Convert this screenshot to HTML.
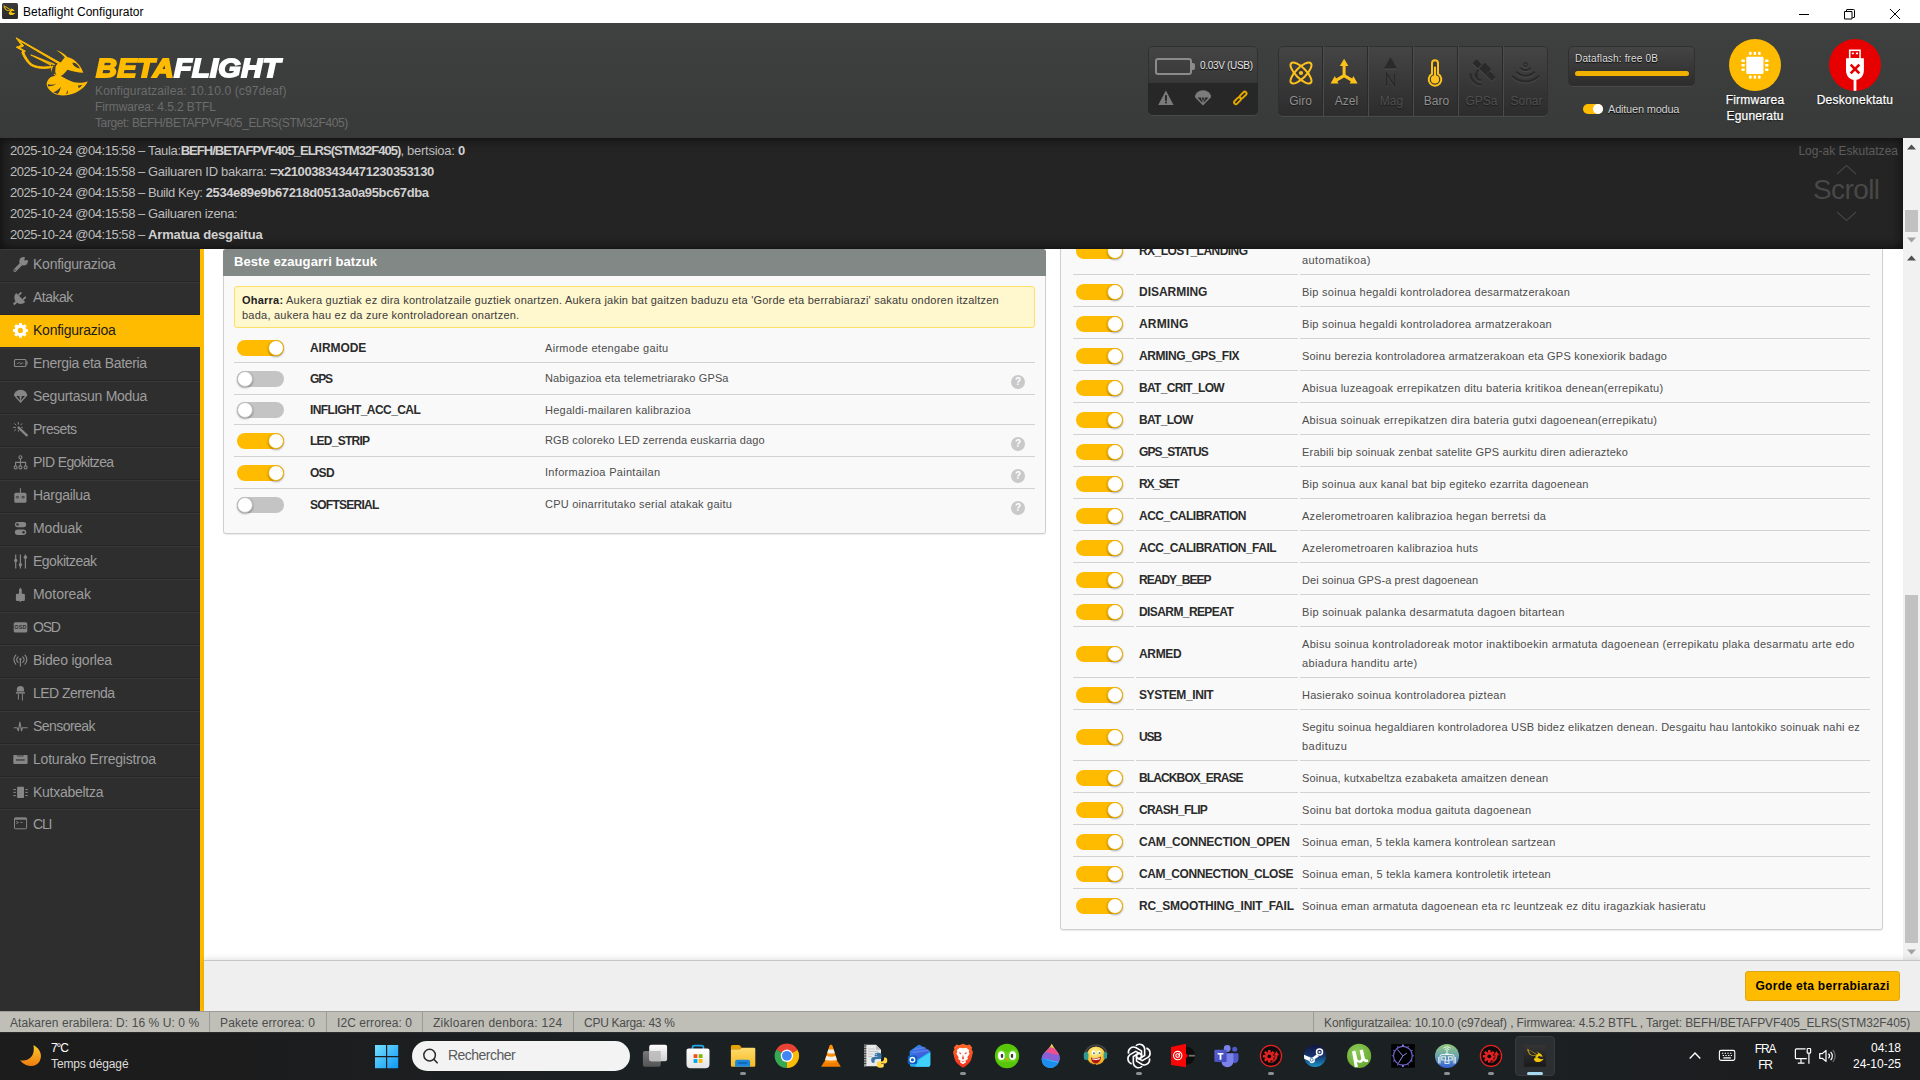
<!DOCTYPE html>
<html lang="eu">
<head>
<meta charset="utf-8">
<title>Betaflight Configurator</title>
<style>
*{box-sizing:border-box;margin:0;padding:0}
html,body{width:1920px;height:1080px;overflow:hidden;background:#fff}
body{font-family:"Liberation Sans",sans-serif;font-size:12px;color:#303030;position:relative}
.abs{position:absolute}
svg{display:block}

/* ---------- window title bar ---------- */
#titlebar{position:absolute;left:0;top:0;width:1920px;height:23px;background:#fff}
#titlebar .ico{position:absolute;left:2px;top:3px;width:16px;height:16px;background:linear-gradient(#3b3b3b,#2a2a2a);border-radius:1.500px;overflow:hidden}
#titlebar .ttl{position:absolute;left:23px;top:5px;font-size:12px;line-height:15px;color:#000;white-space:nowrap}
#titlebar .wb{position:absolute;top:0;width:46px;height:23px}

/* ---------- header ---------- */
#header{position:absolute;left:0;top:23px;width:1920px;height:115px;background:linear-gradient(#3f4140,#383a39)}
#logo{position:absolute;left:10px;top:9px;width:90px;height:68px}
#brand{position:absolute;left:96px;top:31px;font-size:26px;line-height:28px;font-weight:700;font-style:italic;letter-spacing:.3px;white-space:nowrap;color:#fff;-webkit-text-stroke:1.8px;transform:scaleX(1.113);transform-origin:0 0}
#brand b{color:#ffbb00;font-weight:700}
#ver{position:absolute;left:95px;top:60px;font-size:12px;line-height:16px;color:#6c6c6c;white-space:nowrap}

.hbox{position:absolute;border-radius:5px;background:linear-gradient(#454545,#2c2c2c);box-shadow:inset 0 0 0 1px #303030,0 1px 0 #484a49}
#batt{left:1148px;top:23px;width:110px;height:69px;overflow:hidden}
#batt .low{position:absolute;left:0;top:37px;width:110px;height:32px;background:#272727}
#batt .cell{position:absolute;left:7px;top:12px;width:37px;height:17px;border:2px solid #8b8b8b;border-radius:3px}
#batt .nub{position:absolute;left:44px;top:17px;width:3px;height:7px;background:#8b8b8b;border-radius:0 2px 2px 0}
#batt .v{position:absolute;left:52px;top:13px;font-size:10px;line-height:14px;color:#e6e6e6;white-space:nowrap;text-shadow:0 1px 1px #000}
#sens{left:1278px;top:23px;width:270px;height:70px;overflow:hidden}
#sens .c{position:absolute;top:0;width:45px;height:70px;border-left:1px solid #4b4b4b;box-shadow:-1px 0 0 #2a2a2a}
#sens .c:first-child{border-left:0;box-shadow:none}
#sens .c>span{position:absolute;left:0;width:45px;top:48px;text-align:center;font-size:12px;line-height:14px;color:#4f4f4f;text-shadow:0 1px 1px #1a1a1a}
#sens .c.on>span{color:#8f8f8f}
#sens>svg{position:absolute}
#dflash{left:1568px;top:23px;width:127px;height:40px}
#dflash .t{position:absolute;left:7px;top:6px;font-size:10px;line-height:13px;color:#dedede;white-space:nowrap;text-shadow:0 1px 1px #000}
#dflash .bar{position:absolute;left:7px;top:25px;width:114px;height:5px;border-radius:3px;background:#f0b000}
#expert{position:absolute;left:1583px;top:81px;width:20px;height:10px;border-radius:5px;background:#ffbb00}
#expert i{position:absolute;right:0;top:0;width:10px;height:10px;border-radius:5px;background:#fff}
#expertl{position:absolute;left:1608px;top:79px;font-size:11px;line-height:14px;color:#d2d2d2;white-space:nowrap;text-shadow:0 1px 1px #000}
.round{position:absolute;top:16px;width:52px;height:52px;border-radius:50%}
.rl{position:absolute;top:69px;width:100px;text-align:center;font-size:12px;line-height:16px;color:#fff;white-space:nowrap;text-shadow:0 1px 1px #000;-webkit-text-stroke:.25px #fff}
</style>
</head>
<body>

<!-- ================= TITLE BAR ================= -->
<div id="titlebar">
  <div class="ico"><svg width="16" height="16" viewBox="0 0 16 16"><g transform="translate(.6 1.600) scale(.165)" fill="#f5c40c"><path stroke="#f5c40c" stroke-width="2.500" d="M50.800 31.200L6 5.800 11.600 13.300 6.300 15.200 13.200 18.900 11.800 20.300C13.500 25 16.500 30 20.500 33.200 26 36.500 35 37.200 41.500 35.600L41 33C35 34.500 27 34 22.500 31 19.500 28.500 17 24.600 15.500 20.400L17 19 11.500 15.700 15.500 14 12 9.500 48 32.300Z"/><path d="M46.200 18.200C50.500 19.200 55 22 57.600 25.200 62 25.800 66.500 29.500 69.500 33.500 71.200 35.800 72.500 38.200 73.300 40.800 68 40.300 62 39.300 57.200 37.700 56 40 53.800 42.200 50.800 44.100 55 46.500 59.500 49.200 64 50.300 68.500 51.200 73.500 50.800 77.800 49.500 75.500 54.500 70.500 58.500 65 61 59.500 63.300 53 64 47.500 62.800 42.500 61.500 38.500 58 36.800 53.500 36.200 50.500 38 47 41 45 42.500 44.200 44 43.800 45.500 43.700 43.800 43 42.300 41.500 41.600 39.500 40.800 37.300 41 35 42 33.500L43.800 34.400C42.800 37.500 43.500 41.500 46.500 43.200 45.500 41.500 44.800 39.200 45 37 45.300 34.500 46.500 32.500 48.500 31.600 50 30.800 51.500 30 52.300 28.500 53.200 27.200 54 26.200 54.800 25.600 52.500 22.600 49.500 20 46.200 18.200Z"/></g></svg></div>
  <div class="ttl"><span style="letter-spacing:0.05px">Betaflight Configurator</span></div>
  <div class="wb" style="left:1781px"><svg width="46" height="23"><path d="M18 14.500h10" stroke="#000" stroke-width="1" fill="none"/></svg></div>
  <div class="wb" style="left:1826px"><svg width="46" height="23"><path d="M18.500 11.500h7.500v7.500h-7.500zM20.500 11.500v-1.500q0-.5.5-.5h6.500q1 0 1 1v6.500q0 .5-.5.5h-1.500" stroke="#000" stroke-width="1" fill="none"/></svg></div>
  <div class="wb" style="left:1872px"><svg width="46" height="23"><path d="M18 9l10 10M28 9l-10 10" stroke="#000" stroke-width="1" fill="none"/></svg></div>
</div>

<!-- ================= HEADER ================= -->
<div id="header">
  <div id="logo"><svg viewBox="0 0 90 68" width="90" height="68">
<g fill="#ffbb00" stroke="none">
<path stroke="#ffbb00" stroke-width="1" stroke-linejoin="miter" d="M50.800 31.200L6 5.800 11.600 13.300 6.300 15.200 13.200 18.900 11.800 20.300C13.500 25 16.500 30 20.500 33.200 26 36.500 35 37.200 41.500 35.600L41 34.200C35 35.600 27 35.200 21.800 32.200 18.200 29.200 15.600 24.600 13.800 20.400L15.400 19.200 9.300 15.700 13.600 14 9.600 8.700 49.500 32.300Z"/>
<path stroke="#ffbb00" stroke-width=".7" d="M21 22.800L44.700 32.200 44.300 33 20.800 23.300ZM24.500 24.200L41.200 32.600 40.700 33.300 24 24.600Z"/>
<path d="M46.200 18.200C50.500 19.200 55 22 57.600 25.200 62 25.800 66.500 29.500 69.500 33.500 71.200 35.800 72.500 38.200 73.300 40.800 68 40.300 62 39.300 57.200 37.700 56 40 53.800 42.200 50.800 44.100 55 46.500 59.500 49.200 64 50.300 68.500 51.200 73.500 50.800 77.800 49.500 75.500 54.500 70.500 58.500 65 61 59.500 63.300 53 64 47.500 62.800 42.500 61.500 38.500 58 36.800 53.500 36.200 50.500 38 47 41 45 42.500 44.200 44 43.800 45.500 43.700 43.800 43 42.300 41.500 41.600 39.500 40.800 37.300 41 35 42 33.500L43.800 34.400C42.800 37.500 43.500 41.500 46.500 43.200 45.500 41.500 44.800 39.200 45 37 45.300 34.500 46.500 32.500 48.500 31.600 50 30.800 51.500 30 52.300 28.500 53.200 27.200 54 26.200 54.800 25.600 52.500 22.600 49.500 20 46.200 18.200Z"/>
</g>
<g fill="#3d3f3e">
<ellipse cx="43.600" cy="38.600" rx="1.700" ry="4.300" transform="rotate(8 43.600 38.600)"/>
<path d="M62.300 31C64.500 30 67.500 32 70 36.400 66.500 36 63.500 34.500 62.300 31Z"/>
<path d="M37.800 52.200C40.500 53 43.500 52.800 46.300 51.800 44 53.800 40.500 54.600 38 54.200Z"/>
<path d="M43.200 60.200C46 59.500 48.800 57.500 50.800 54.800 50.500 57.500 49.500 60 47.800 62Z"/>
<path d="M55.800 61.500C56.800 60.500 57.500 59.300 57.700 58 58.200 59.300 58 60.600 57.300 61.700Z"/>
<path d="M68 53.600C69.500 53.700 71 53.400 72.300 52.800 71.500 54.200 70 55.500 68.600 56Z"/>
</g>
</svg></div>
  <div id="brand"><b>BETA</b>FLIGHT</div>
  <div id="ver"><span style="letter-spacing:0.14px">Konfiguratzailea: 10.10.0 (c97deaf)</span><br><span style="letter-spacing:-0.09px">Firmwarea: 4.5.2 BTFL</span><br><span style="letter-spacing:-0.39px">Target: BEFH/BETAFPVF405_ELRS(STM32F405)</span></div>

  <div id="batt" class="hbox">
    <div class="low"></div>
    <div class="cell"></div><div class="nub"></div>
    <div class="v"><span style="letter-spacing:-0.31px">0.03V (USB)</span></div><svg class="abs" style="left:10px;top:44px" width="16" height="16" viewBox="0 0 16 16"><path d="M7.900 .4L15.600 15.100H.2Z" fill="#7b7b7b"/><rect x="7" y="5.200" width="1.900" height="5.600" fill="#272727"/><rect x="7" y="11.600" width="1.900" height="1.700" fill="#272727"/></svg><svg class="abs" style="left:47px;top:44px" width="16" height="16" viewBox="0 0 16 16"><path d="M0 7.200A8 7 0 0 1 16 7.200L8 15.400Z" fill="#7b7b7b"/><path d="M2.600 7.400L6 7.400 7.400 13ZM10 7.400L13.400 7.400 8.600 13ZM6.900 7.400H9.100L8 12.400Z" fill="#272727"/></svg><svg class="abs" style="left:84px;top:44px" width="17" height="16" viewBox="0 0 17 16"><g fill="none" stroke="#e6a800" stroke-width="1.900" transform="rotate(-45 8.300 7.900)"><rect x=".25" y="6.100" width="8.100" height="3.600" rx="1.800"/><rect x="8.250" y="6.100" width="8.100" height="3.600" rx="1.800"/></g></svg>
  </div>

  <div id="sens" class="hbox">
    <div class="c on" style="left:0"><span>Giro</span></div><svg style="left:11px;top:15px" width="24" height="24" viewBox="0 0 24 24" overflow="visible"><g fill="none" stroke="#fcc21b" stroke-width="2"><ellipse cx="12" cy="12" rx="13.900" ry="5.200" transform="rotate(45 12 12)"/><ellipse cx="12" cy="12" rx="13.900" ry="5.200" transform="rotate(-45 12 12)"/></g><circle cx="12" cy="12" r="2.100" fill="#fcc21b"/></svg><svg style="left:52px;top:12px" width="30" height="27" viewBox="0 0 30 27"><g fill="#fcc21b"><path d="M14.100 .8L18.400 8.100H9.800Z"/><rect x="12.600" y="7.500" width="3" height="10.500"/><path d="M14.100 17.600L5.500 22.600" stroke="#fcc21b" stroke-width="3" fill="none"/><path d="M14.100 17.600L22.700 22.600" stroke="#fcc21b" stroke-width="3" fill="none"/><path d="M.6 25.500L4.800 17.900 8.500 25.500Z"/><path d="M27.600 25.500L23.400 17.900 19.700 25.500Z"/></g></svg><svg style="left:102px;top:9px;filter:drop-shadow(0 1px 0 rgba(255,255,255,.09))" width="22" height="33" viewBox="0 0 22 33"><path d="M10.500 1.900L16.900 13.600H4.100Z" fill="#2a2a2a"/><path d="M6.600 31V18.500L14.600 31V18.500" fill="none" stroke="#2a2a2a" stroke-width="1.400"/></svg><svg style="left:149px;top:13px" width="16" height="29" viewBox="0 0 16 29"><path d="M5 4.200a3 3 0 0 1 6 0V14.900a6.300 6.300 0 1 1-6 0Z" fill="none" stroke="#fcc21b" stroke-width="2"/><circle cx="8" cy="20.400" r="4.100" fill="#fcc21b"/><rect x="7" y="7.700" width="2" height="10" fill="#fcc21b"/></svg><svg style="left:0;top:0;filter:drop-shadow(0 1px 0 rgba(255,255,255,.09))" width="270" height="70" viewBox="0 0 270 70"><g fill="#2a2a2a"><rect x="196.4" y="14.3" width="5.600" height="7.200" transform="rotate(-45 199.2 17.9)"/><rect x="203.1" y="18.3" width="8.200" height="9.200" transform="rotate(-45 207.2 22.9)"/><rect x="210.0" y="25.9" width="5.600" height="8.400" transform="rotate(-45 212.8 30.1)"/></g><g fill="none" stroke="#2a2a2a" stroke-width="2.100"><path d="M197.6 27.4a5.700 5.700 0 0 0 5.700 6.700"/><path d="M192.5 27.4a10.800 10.800 0 0 0 10.800 11.200"/><path d="M200.8 23.9a4 4 0 0 0 -1 6.500" /></g></svg><svg style="left:0;top:0;filter:drop-shadow(0 1px 0 rgba(255,255,255,.09))" width="270" height="70" viewBox="0 0 270 70"><g fill="none" stroke="#2a2a2a" stroke-width="2"><path d="M242.2 21.9A7.4 7.4 0 0 0 252.8 21.9"/><path d="M238.2 25.7A12.9 12.9 0 0 0 256.8 25.7"/><path d="M234.0 29.8A18.8 18.8 0 0 0 261.0 29.8"/></g><circle cx="247.5" cy="18.7" r="1.800" fill="none" stroke="#2a2a2a" stroke-width="1.300"/></svg>
    <div class="c on" style="left:45px"><span>Azel</span></div>
    <div class="c" style="left:90px"><span>Mag</span></div>
    <div class="c on" style="left:135px"><span>Baro</span></div>
    <div class="c" style="left:180px"><span>GPSa</span></div>
    <div class="c" style="left:225px"><span>Sonar</span></div>
  </div>

  <div id="dflash" class="hbox"><div class="t"><span style="letter-spacing:0.17px">Dataflash: free 0B</span></div><div class="bar"></div></div>
  <div id="expert"><i></i></div>
  <div id="expertl"><span style="letter-spacing:-0.21px">Adituen modua</span></div>

  <div class="round" style="left:1729px;background:#ffbb00"><svg width="52" height="52" viewBox="0 0 52 52"><g fill="#fff"><rect x="17.300" y="17.700" width="17.200" height="17.200" rx="1.200"/><rect x="20.1" y="12.700" width="2.500" height="3.400" rx=".8"/><rect x="20.1" y="36.400" width="2.500" height="3.400" rx=".8"/><rect x="24.6" y="12.700" width="2.500" height="3.400" rx=".8"/><rect x="24.6" y="36.400" width="2.500" height="3.400" rx=".8"/><rect x="29.1" y="12.700" width="2.500" height="3.400" rx=".8"/><rect x="29.1" y="36.400" width="2.500" height="3.400" rx=".8"/><rect x="12.400" y="20.5" width="3.500" height="2.500" rx=".8"/><rect x="36" y="20.5" width="3.500" height="2.500" rx=".8"/><rect x="12.400" y="25" width="3.500" height="2.500" rx=".8"/><rect x="36" y="25" width="3.500" height="2.500" rx=".8"/><rect x="12.400" y="29.4" width="3.500" height="2.500" rx=".8"/><rect x="36" y="29.4" width="3.500" height="2.500" rx=".8"/></g></svg></div>
  <div class="rl" style="left:1705px"><span style="letter-spacing:0.22px">Firmwarea</span><br><span style="letter-spacing:0.18px">Eguneratu</span></div>
  <div class="round" style="left:1829px;background:#e60000;overflow:hidden"><svg width="52" height="52" viewBox="0 0 52 52"><g fill="#fff"><path d="M19.900 10.600H31.800V19.300H34.900V31.200C34.900 36.500 31.500 41 26 41 20.500 41 17 36.500 17 31.200V19.300H19.900Z"/><rect x="24.600" y="40" width="2.800" height="11.800"/></g><rect x="21.500" y="12.100" width="8.800" height="6.900" fill="#e60000"/><rect x="22.800" y="13.600" width="2.100" height="1.600" fill="#fff"/><rect x="26.900" y="13.600" width="2.100" height="1.600" fill="#fff"/><path d="M21.700 25.600L30.300 34.400M30.300 25.600L21.700 34.400" stroke="#e60000" stroke-width="2.600" fill="none"/></svg></div>
  <div class="rl" style="left:1805px"><span style="letter-spacing:0.27px">Deskonektatu</span></div>
</div>

<!-- ================= LOG ================= -->
<style>
#log{position:absolute;left:0;top:138px;width:1903px;height:111px;background:#242424;box-shadow:inset 0 0 12px #0a0a0a;overflow:hidden}
#log .l{position:absolute;left:10px;font-size:13px;line-height:21px;color:#bdbdbd;white-space:pre}
#log .l b{font-weight:700;color:#d0d0d0}
#log .lt{position:absolute;right:5px;top:6px;font-size:12px;line-height:15px;color:#5c5c5c}
#log .sc{position:absolute;left:1813px;top:35px;font-size:28px;line-height:34px;color:#484848;letter-spacing:-.6px}
.sbar{position:absolute;left:1903px;width:17px;background:#f1f1f1}
.sbar .th{position:absolute;left:2px;width:13px;background:#c1c1c1}
.sbar svg{position:absolute;left:4px}

/* ---------- sidebar ---------- */
#side{position:absolute;left:0;top:249px;width:200px;height:762px;background:#2e2e2e}
#side .i{position:absolute;left:0;width:200px;height:33px;border-top:1px solid #383838;border-bottom:1px solid #262626;color:#9d9d9d;font-size:14px;line-height:16px;white-space:nowrap}
#side .i>span{position:absolute;left:33px;top:6px}
#side .i svg{position:absolute;left:12px;top:6px;width:17px;height:17px;color:#868686}
#side .i.act{background:#ffbb00;color:#1c1c1c;border-color:#ffbb00;width:204px;height:32px}
#ybar{position:absolute;left:200px;top:249px;width:4px;height:762px;background:#ffbb00}
</style>
<div id="log">
  <div class="l" style="top:2px"><span style="letter-spacing:-0.45px">2025-10-24 @04:15:58 &ndash; </span><span style="letter-spacing:-0.34px">Taula:</span><b><span style="letter-spacing:-0.96px">BEFH/BETAFPVF405_ELRS(STM32F405)</span></b><span style="letter-spacing:-0.26px">, bertsioa: </span><b>0</b></div>
  <div class="l" style="top:23px"><span style="letter-spacing:-0.45px">2025-10-24 @04:15:58 &ndash; </span><span style="letter-spacing:-0.27px">Gailuaren ID bakarra: </span><b><span style="letter-spacing:-0.42px">=x2100383434471230353130</span></b></div>
  <div class="l" style="top:44px"><span style="letter-spacing:-0.45px">2025-10-24 @04:15:58 &ndash; </span><span style="letter-spacing:-0.41px">Build Key: </span><b><span style="letter-spacing:-0.37px">2534e89e9b67218d0513a0a95bc67dba</span></b></div>
  <div class="l" style="top:65px"><span style="letter-spacing:-0.45px">2025-10-24 @04:15:58 &ndash; </span><span style="letter-spacing:-0.33px">Gailuaren izena:</span></div>
  <div class="l" style="top:86px"><span style="letter-spacing:-0.45px">2025-10-24 @04:15:58 &ndash; </span><b><span style="letter-spacing:-0.15px">Armatua desgaitua</span></b></div>
  <div class="lt"><span style="letter-spacing:0.01px">Log-ak Eskutatzea</span></div>
  <div class="sc">Scroll</div>
  <svg class="abs" style="left:1836px;top:26px" width="21" height="11"><path d="M1 10L10.500 1.500 20 10" fill="none" stroke="#444" stroke-width="1.200"/></svg>
  <svg class="abs" style="left:1836px;top:73px" width="21" height="11"><path d="M1 1L10.500 9.500 20 1" fill="none" stroke="#444" stroke-width="1.200"/></svg>
</div>
<div class="sbar" style="top:138px;height:111px">
  <svg style="top:6px" width="9" height="6"><path d="M0 5.500L4.500 .5 9 5.500z" fill="#505050"/></svg>
  <div class="th" style="top:72px;height:22px"></div>
  <svg style="top:99px" width="9" height="6"><path d="M0 .5L4.500 5.500 9 .5z" fill="#a3a3a3"/></svg>
</div>

<!-- ================= SIDEBAR ================= -->
<div id="side">
  <div class="i" style="top:0"><svg viewBox="0 0 17 17" ><path d="M2.900 14.300L10 7.200" stroke="currentColor" stroke-width="3.100" stroke-linecap="round"/><circle cx="11.600" cy="5.200" r="4.300" fill="currentColor"/><path d="M12.300 4.500L13.100 0 17 0 17 3.700Z" fill="#2e2e2e"/><circle cx="2.900" cy="14.300" r=".7" fill="#2e2e2e"/></svg><span><span style="letter-spacing:-0.24px">Konfigurazioa</span></span></div>
  <div class="i" style="top:33px"><svg viewBox="0 0 17 17" ><g transform="rotate(45 8.700 8.500)" fill="currentColor"><path d="M2.300 8.500h12.800a6.400 6.400 0 0 1-12.800 0z"/><rect x="4.700" y="4.300" width="1.800" height="4.200" rx=".8"/><rect x="10.900" y="4.300" width="1.800" height="4.200" rx=".8"/><rect x="7.600" y="14.400" width="2.200" height="4"/></g></svg><span><span style="letter-spacing:-0.50px">Atakak</span></span></div>
  <div class="i act" style="top:66px"><svg viewBox="0 0 17 17" ><g transform="translate(8.400 8.400)" fill="#fff"><circle r="4.200" fill="none" stroke="#fff" stroke-width="3.200"/><rect x="-1.500" y="-7.400" width="3" height="2.600" rx=".5" transform="rotate(0)"/><rect x="-1.500" y="-7.400" width="3" height="2.600" rx=".5" transform="rotate(45)"/><rect x="-1.500" y="-7.400" width="3" height="2.600" rx=".5" transform="rotate(90)"/><rect x="-1.500" y="-7.400" width="3" height="2.600" rx=".5" transform="rotate(135)"/><rect x="-1.500" y="-7.400" width="3" height="2.600" rx=".5" transform="rotate(180)"/><rect x="-1.500" y="-7.400" width="3" height="2.600" rx=".5" transform="rotate(225)"/><rect x="-1.500" y="-7.400" width="3" height="2.600" rx=".5" transform="rotate(270)"/><rect x="-1.500" y="-7.400" width="3" height="2.600" rx=".5" transform="rotate(315)"/></g></svg><span><span style="letter-spacing:-0.24px">Konfigurazioa</span></span></div>
  <div class="i" style="top:99px"><svg viewBox="0 0 17 17" ><rect x="2.500" y="4.500" width="11.400" height="7" rx="1" fill="none" stroke="currentColor" stroke-width="1.200"/><rect x="14.300" y="6.300" width="1.200" height="3.400" fill="currentColor"/><path d="M4.800 8.400h1.600l1-1.200 1.400 2.200 1-1.400h1.500" fill="none" stroke="currentColor" stroke-width=".8"/></svg><span><span style="letter-spacing:-0.32px">Energia eta Bateria</span></span></div>
  <div class="i" style="top:132px"><svg viewBox="0 0 17 17" ><path d="M1.900 7.600A6.700 5.800 0 0 1 15.300 7.600L8.600 15Z" fill="currentColor"/><path d="M4.300 7.900L7.400 7.900 8.200 12.800ZM9.800 7.900L12.900 7.900 9 12.800Z" fill="#2e2e2e"/></svg><span><span style="letter-spacing:-0.26px">Segurtasun Modua</span></span></div>
  <div class="i" style="top:165px"><svg viewBox="0 0 17 17" ><path d="M6.600 6.600L14.800 14.300" stroke="currentColor" stroke-width="2.400" stroke-linecap="round"/><path d="M6.400 1.100v2.500M1.100 6.400h2.800M2.300 2.400l1.900 1.900M10.100 2.400L8.600 4.200M2.300 9.900l1.900-1.600M9.200 6.400h1.500M6.400 9v1.600" stroke="currentColor" stroke-width="1" fill="none"/></svg><span><span style="letter-spacing:-0.56px">Presets</span></span></div>
  <div class="i" style="top:198px"><svg viewBox="0 0 17 17" ><g fill="none" stroke="currentColor" stroke-width="1.100"><circle cx="8.400" cy="3.200" r="1.500"/><path d="M8.400 4.700v7.200M3.600 11.900V8.400h10V11.900"/><circle cx="3.600" cy="13.400" r="1.500"/><circle cx="8.400" cy="13.400" r="1.500"/><circle cx="13.600" cy="13.400" r="1.500"/></g></svg><span><span style="letter-spacing:-0.63px">PID Egokitzea</span></span></div>
  <div class="i" style="top:231px"><svg viewBox="0 0 17 17" ><rect x="2.300" y="5.800" width="12.200" height="10" rx="1.600" fill="currentColor"/><rect x="7.900" y="1.100" width="1" height="5" fill="currentColor"/><ellipse cx="5.400" cy="10.200" rx="1.300" ry=".9" fill="none" stroke="#2e2e2e" stroke-width=".8"/><ellipse cx="11.100" cy="10.200" rx="1.300" ry=".9" fill="none" stroke="#2e2e2e" stroke-width=".8"/></svg><span><span style="letter-spacing:-0.30px">Hargailua</span></span></div>
  <div class="i" style="top:264px"><svg viewBox="0 0 17 17" ><rect x="2.900" y="1.900" width="11.300" height="5.300" rx="2.650" fill="currentColor"/><rect x="2.900" y="9.500" width="11.300" height="5.500" rx="2.750" fill="currentColor"/><circle cx="5.500" cy="4.500" r="1.200" fill="#2e2e2e"/><circle cx="11.500" cy="12.200" r="1.200" fill="#2e2e2e"/></svg><span><span style="letter-spacing:-0.12px">Moduak</span></span></div>
  <div class="i" style="top:297px"><svg viewBox="0 0 17 17" ><path d="M3.700 1.400v14.100M8.400 1.400v14.100M13.400 1.400v14.100" stroke="currentColor" stroke-width="1.200"/><circle cx="3.700" cy="7.400" r="1.700" fill="currentColor"/><circle cx="8.400" cy="11.700" r="1.700" fill="currentColor"/><circle cx="13.400" cy="4.200" r="1.700" fill="currentColor"/></svg><span><span style="letter-spacing:-0.50px">Egokitzeak</span></span></div>
  <div class="i" style="top:330px"><svg viewBox="0 0 17 17" ><rect x="3.900" y="7.800" width="9" height="7.200" rx="1.300" fill="currentColor"/><path d="M7 8.200V3.800L8.400 1.500 9.800 3.800V8.200Z" fill="currentColor"/><rect x="7.700" y="15" width="1.400" height=".8" fill="currentColor"/></svg><span><span style="letter-spacing:-0.04px">Motoreak</span></span></div>
  <div class="i" style="top:363px"><svg viewBox="0 0 17 17" ><rect x="1.700" y="3.300" width="13.600" height="10.300" rx="1.600" fill="currentColor"/><text x="8.500" y="10.400" text-anchor="middle" font-family="Liberation Sans" font-weight="700" font-size="5.400" fill="#2e2e2e" letter-spacing=".2">OSD</text></svg><span><span style="letter-spacing:-1.20px">OSD</span></span></div>
  <div class="i" style="top:396px"><svg viewBox="0 0 17 17" ><g fill="none" stroke="currentColor" stroke-width="1.200" stroke-linecap="round"><path d="M8.400 7.600V14"/><path d="M6 4.900a3.400 3.400 0 0 0 0 5.400M10.800 4.900a3.400 3.400 0 0 1 0 5.400M3.800 3.100a6.400 6.400 0 0 0 0 9M13 3.100a6.400 6.400 0 0 1 0 9"/></g><circle cx="8.400" cy="7.200" r="1.100" fill="currentColor"/></svg><span><span style="letter-spacing:-0.22px">Bideo igorlea</span></span></div>
  <div class="i" style="top:429px"><svg viewBox="0 0 17 17" ><path d="M4.800 6.400V4.700a3.600 3.600 0 0 1 7.200 0V6.400Z" fill="currentColor"/><rect x="3.900" y="7.100" width="9" height="1.500" fill="currentColor"/><path d="M6.400 8.900v5.700M10.400 8.900v6.600" stroke="currentColor" stroke-width="1"/></svg><span><span style="letter-spacing:-0.53px">LED Zerrenda</span></span></div>
  <div class="i" style="top:462px"><svg viewBox="0 0 17 17" ><path d="M1.700 9.700H5L6.300 12.800 7.900 4.100 9.500 12.800 10.500 9.700H15.700" fill="none" stroke="currentColor" stroke-width="1.100" stroke-linejoin="round"/></svg><span><span style="letter-spacing:-0.55px">Sensoreak</span></span></div>
  <div class="i" style="top:495px"><svg viewBox="0 0 17 17" ><rect x="1.300" y="3.900" width="14.300" height="9.100" rx="1" fill="currentColor"/><rect x="5.400" y="3.900" width="6" height="1.500" fill="#2e2e2e"/><rect x="6" y="4.300" width="4.800" height=".6" fill="currentColor"/><rect x="4.200" y="8.300" width="8.400" height="1.300" fill="#2e2e2e"/><path d="M6.300 8.300v1.300M8.400 8.300v1.300M10.500 8.300v1.300" stroke="currentColor" stroke-width=".5"/></svg><span><span style="letter-spacing:-0.20px">Loturako Erregistroa</span></span></div>
  <div class="i" style="top:528px;height:32px"><svg viewBox="0 0 17 17" ><rect x="5.100" y="2.800" width="6.900" height="11.200" rx=".8" fill="currentColor"/><path d="M1.300 5.600h2.600M1.300 8.400h2.600M1.300 11.600h2.600M13.300 5.600h2.500M13.300 8.400h2.500M13.300 11.600h2.500" stroke="currentColor" stroke-width="1"/></svg><span><span style="letter-spacing:-0.27px">Kutxabeltza</span></span></div>
  <div class="i" style="top:560px;border-bottom:0"><svg viewBox="0 0 17 17" ><rect x="2.500" y="1.900" width="12.100" height="10.900" rx=".8" fill="none" stroke="currentColor" stroke-width="1"/><rect x="2.500" y="1.900" width="12.100" height="1.800" fill="currentColor"/><path d="M4.100 5.200L6.500 6.500 4.100 7.800M8.200 6.400h2.500" fill="none" stroke="currentColor" stroke-width=".8"/></svg><span><span style="letter-spacing:-1.20px">CLI</span></span></div>
</div>
<div id="ybar"></div>

<style>
#content{position:absolute;left:204px;top:249px;width:1699px;height:711px;background:#fff;overflow:hidden}
.panel{position:absolute;background:#f9f9f9;border:1px solid #cfcfcf;border-radius:3px;box-shadow:0 1px 1px rgba(0,0,0,.08)}
.ph{position:absolute;left:-1px;top:-1px;height:27px;background:#828885;border-radius:3px 3px 0 0;color:#fff;font-weight:700;font-size:13px;line-height:16px;padding:5px 0 0 11px;white-space:nowrap}
.note{position:absolute;background:#fff7cd;border:1px solid #ffe066;border-radius:3px;font-size:11px;line-height:15px;color:#3c3c3c;padding:6px 7px;letter-spacing:.23px;white-space:nowrap}
.note b{color:#222}
.r{position:absolute;border-bottom:1px solid #d2d2d2}
.tg{position:absolute;width:47px;height:16px;border-radius:8px;background:#ffbb00}
.tg i{position:absolute;right:0;top:0;width:16px;height:16px;border-radius:50%;background:#fff;border:1px solid #f0b000;box-shadow:0 1px 2px rgba(0,0,0,.35)}
.tg.off{background:#c4c4c4}
.tg.off i{left:0;right:auto;border-color:#bdbdbd}
.lb{position:absolute;font-weight:700;font-size:12px;line-height:16px;color:#2b2b2b;white-space:nowrap}
.ds{position:absolute;font-size:11px;line-height:19px;color:#4d4d4d;white-space:nowrap}
.hp{position:absolute;width:14px;height:14px;border-radius:50%;background:#c9c9c9;color:#fff;font-weight:700;font-size:10px;line-height:14px;text-align:center}
</style>

<div id="content">
<div class="panel" style="left:19px;top:0px;width:823px;height:285px">
<div class="ph" style="width:823px"><span style="letter-spacing:0.07px">Beste ezaugarri batzuk</span></div>
<div class="note" style="left:10px;top:36px;width:801px;height:42px"><b>Oharra:</b> Aukera guztiak ez dira kontrolatzaile guztiek onartzen. Aukera jakin bat gaitzen baduzu eta 'Gorde eta berrabiarazi' sakatu ondoren itzaltzen<br>bada, aukera hau ez da zure kontroladorean onartzen.</div>
<div class="r" style="left:10px;top:82px;width:801px;height:31px">
<div class="tg" style="left:3px;top:8px"><i></i></div>
<div class="lb" style="left:76px;top:8px"><span style="letter-spacing:-0.06px">AIRMODE</span></div>
<div class="ds" style="left:311px;top:7px"><span style="letter-spacing:0.30px">Airmode etengabe gaitu</span></div>
</div>
<div class="r" style="left:10px;top:113px;width:801px;height:32px">
<div class="tg off" style="left:3px;top:8px"><i></i></div>
<div class="lb" style="left:76px;top:8px"><span style="letter-spacing:-1.20px">GPS</span></div>
<div class="ds" style="left:311px;top:6px"><span style="letter-spacing:0.15px">Nabigazioa eta telemetriarako GPSa</span></div>
<div class="hp" style="left:777px;top:12px">?</div>
</div>
<div class="r" style="left:10px;top:145px;width:801px;height:30px">
<div class="tg off" style="left:3px;top:7px"><i></i></div>
<div class="lb" style="left:76px;top:7px"><span style="letter-spacing:-0.57px">INFLIGHT_ACC_CAL</span></div>
<div class="ds" style="left:311px;top:6px"><span style="letter-spacing:0.25px">Hegaldi-mailaren kalibrazioa</span></div>
</div>
<div class="r" style="left:10px;top:175px;width:801px;height:32px">
<div class="tg" style="left:3px;top:8px"><i></i></div>
<div class="lb" style="left:76px;top:8px"><span style="letter-spacing:-0.75px">LED_STRIP</span></div>
<div class="ds" style="left:311px;top:6px"><span style="letter-spacing:0.11px">RGB coloreko LED zerrenda euskarria dago</span></div>
<div class="hp" style="left:777px;top:12px">?</div>
</div>
<div class="r" style="left:10px;top:207px;width:801px;height:32px">
<div class="tg" style="left:3px;top:8px"><i></i></div>
<div class="lb" style="left:76px;top:8px"><span style="letter-spacing:-0.71px">OSD</span></div>
<div class="ds" style="left:311px;top:6px"><span style="letter-spacing:0.30px">Informazioa Paintailan</span></div>
<div class="hp" style="left:777px;top:12px">?</div>
</div>
<div class="r" style="left:10px;top:239px;width:801px;height:32px;border-bottom:0">
<div class="tg off" style="left:3px;top:8px"><i></i></div>
<div class="lb" style="left:76px;top:8px"><span style="letter-spacing:-0.74px">SOFTSERIAL</span></div>
<div class="ds" style="left:311px;top:6px"><span style="letter-spacing:0.23px">CPU oinarritutako serial atakak gaitu</span></div>
<div class="hp" style="left:777px;top:12px">?</div>
</div>
</div>
<div class="panel" style="left:856px;top:-49px;width:823px;height:730px">
<div class="r" style="left:12px;top:73px;width:61px;height:1px"></div>
<div class="r" style="left:75px;top:73px;width:162px;height:1px"></div>
<div class="r" style="left:239px;top:73px;width:570px;height:1px"></div>
<div class="tg" style="left:15px;top:42px"><i></i></div>
<div class="lb" style="left:78px;top:42px"><span style="letter-spacing:-0.55px">RX_LOST_LANDING</span></div>
<div class="ds" style="left:241px;top:31px"><span style="letter-spacing:1.17px">Bip soinua hargailuaren seinalea galdu eta lurreratzean (lurreratze</span><br><span style="letter-spacing:0.44px">automatikoa)</span></div>
<div class="r" style="left:12px;top:105px;width:61px;height:1px"></div>
<div class="r" style="left:75px;top:105px;width:162px;height:1px"></div>
<div class="r" style="left:239px;top:105px;width:570px;height:1px"></div>
<div class="tg" style="left:15px;top:83px"><i></i></div>
<div class="lb" style="left:78px;top:83px"><span style="letter-spacing:-0.03px">DISARMING</span></div>
<div class="ds" style="left:241px;top:82px"><span style="letter-spacing:0.28px">Bip soinua hegaldi kontroladorea desarmatzerakoan</span></div>
<div class="r" style="left:12px;top:137px;width:61px;height:1px"></div>
<div class="r" style="left:75px;top:137px;width:162px;height:1px"></div>
<div class="r" style="left:239px;top:137px;width:570px;height:1px"></div>
<div class="tg" style="left:15px;top:115px"><i></i></div>
<div class="lb" style="left:78px;top:115px"><span style="letter-spacing:0.15px">ARMING</span></div>
<div class="ds" style="left:241px;top:114px"><span style="letter-spacing:0.29px">Bip soinua hegaldi kontroladorea armatzerakoan</span></div>
<div class="r" style="left:12px;top:169px;width:61px;height:1px"></div>
<div class="r" style="left:75px;top:169px;width:162px;height:1px"></div>
<div class="r" style="left:239px;top:169px;width:570px;height:1px"></div>
<div class="tg" style="left:15px;top:147px"><i></i></div>
<div class="lb" style="left:78px;top:147px"><span style="letter-spacing:-0.42px">ARMING_GPS_FIX</span></div>
<div class="ds" style="left:241px;top:146px"><span style="letter-spacing:0.21px">Soinu berezia kontroladorea armatzerakoan eta GPS konexiorik badago</span></div>
<div class="r" style="left:12px;top:201px;width:61px;height:1px"></div>
<div class="r" style="left:75px;top:201px;width:162px;height:1px"></div>
<div class="r" style="left:239px;top:201px;width:570px;height:1px"></div>
<div class="tg" style="left:15px;top:179px"><i></i></div>
<div class="lb" style="left:78px;top:179px"><span style="letter-spacing:-0.68px">BAT_CRIT_LOW</span></div>
<div class="ds" style="left:241px;top:178px"><span style="letter-spacing:0.28px">Abisua luzeagoak errepikatzen ditu bateria kritikoa denean(errepikatu)</span></div>
<div class="r" style="left:12px;top:233px;width:61px;height:1px"></div>
<div class="r" style="left:75px;top:233px;width:162px;height:1px"></div>
<div class="r" style="left:239px;top:233px;width:570px;height:1px"></div>
<div class="tg" style="left:15px;top:211px"><i></i></div>
<div class="lb" style="left:78px;top:211px"><span style="letter-spacing:-0.69px">BAT_LOW</span></div>
<div class="ds" style="left:241px;top:210px"><span style="letter-spacing:0.27px">Abisua soinuak errepikatzen dira bateria gutxi dagoenean(errepikatu)</span></div>
<div class="r" style="left:12px;top:265px;width:61px;height:1px"></div>
<div class="r" style="left:75px;top:265px;width:162px;height:1px"></div>
<div class="r" style="left:239px;top:265px;width:570px;height:1px"></div>
<div class="tg" style="left:15px;top:243px"><i></i></div>
<div class="lb" style="left:78px;top:243px"><span style="letter-spacing:-0.95px">GPS_STATUS</span></div>
<div class="ds" style="left:241px;top:242px"><span style="letter-spacing:0.20px">Erabili bip soinuak zenbat satelite GPS aurkitu diren adierazteko</span></div>
<div class="r" style="left:12px;top:297px;width:61px;height:1px"></div>
<div class="r" style="left:75px;top:297px;width:162px;height:1px"></div>
<div class="r" style="left:239px;top:297px;width:570px;height:1px"></div>
<div class="tg" style="left:15px;top:275px"><i></i></div>
<div class="lb" style="left:78px;top:275px"><span style="letter-spacing:-1.20px">RX_SET</span></div>
<div class="ds" style="left:241px;top:274px"><span style="letter-spacing:0.23px">Bip soinua aux kanal bat bip egiteko ezarrita dagoenean</span></div>
<div class="r" style="left:12px;top:329px;width:61px;height:1px"></div>
<div class="r" style="left:75px;top:329px;width:162px;height:1px"></div>
<div class="r" style="left:239px;top:329px;width:570px;height:1px"></div>
<div class="tg" style="left:15px;top:307px"><i></i></div>
<div class="lb" style="left:78px;top:307px"><span style="letter-spacing:-0.50px">ACC_CALIBRATION</span></div>
<div class="ds" style="left:241px;top:306px"><span style="letter-spacing:0.27px">Azelerometroaren kalibrazioa hegan berretsi da</span></div>
<div class="r" style="left:12px;top:361px;width:61px;height:1px"></div>
<div class="r" style="left:75px;top:361px;width:162px;height:1px"></div>
<div class="r" style="left:239px;top:361px;width:570px;height:1px"></div>
<div class="tg" style="left:15px;top:339px"><i></i></div>
<div class="lb" style="left:78px;top:339px"><span style="letter-spacing:-0.50px">ACC_CALIBRATION_FAIL</span></div>
<div class="ds" style="left:241px;top:338px"><span style="letter-spacing:0.28px">Azelerometroaren kalibrazioa huts</span></div>
<div class="r" style="left:12px;top:393px;width:61px;height:1px"></div>
<div class="r" style="left:75px;top:393px;width:162px;height:1px"></div>
<div class="r" style="left:239px;top:393px;width:570px;height:1px"></div>
<div class="tg" style="left:15px;top:371px"><i></i></div>
<div class="lb" style="left:78px;top:371px"><span style="letter-spacing:-0.98px">READY_BEEP</span></div>
<div class="ds" style="left:241px;top:370px"><span style="letter-spacing:0.08px">Dei soinua GPS-a prest dagoenean</span></div>
<div class="r" style="left:12px;top:425px;width:61px;height:1px"></div>
<div class="r" style="left:75px;top:425px;width:162px;height:1px"></div>
<div class="r" style="left:239px;top:425px;width:570px;height:1px"></div>
<div class="tg" style="left:15px;top:403px"><i></i></div>
<div class="lb" style="left:78px;top:403px"><span style="letter-spacing:-0.59px">DISARM_REPEAT</span></div>
<div class="ds" style="left:241px;top:402px"><span style="letter-spacing:0.30px">Bip soinuak palanka desarmatuta dagoen bitartean</span></div>
<div class="r" style="left:12px;top:476px;width:61px;height:1px"></div>
<div class="r" style="left:75px;top:476px;width:162px;height:1px"></div>
<div class="r" style="left:239px;top:476px;width:570px;height:1px"></div>
<div class="tg" style="left:15px;top:445px"><i></i></div>
<div class="lb" style="left:78px;top:445px"><span style="letter-spacing:-0.35px">ARMED</span></div>
<div class="ds" style="left:241px;top:434px"><span style="letter-spacing:0.33px">Abisu soinua kontroladoreak motor inaktiboekin armatuta dagoenean (errepikatu plaka desarmatu arte edo</span><br><span style="letter-spacing:0.36px">abiadura handitu arte)</span></div>
<div class="r" style="left:12px;top:508px;width:61px;height:1px"></div>
<div class="r" style="left:75px;top:508px;width:162px;height:1px"></div>
<div class="r" style="left:239px;top:508px;width:570px;height:1px"></div>
<div class="tg" style="left:15px;top:486px"><i></i></div>
<div class="lb" style="left:78px;top:486px"><span style="letter-spacing:-0.40px">SYSTEM_INIT</span></div>
<div class="ds" style="left:241px;top:485px"><span style="letter-spacing:0.27px">Hasierako soinua kontroladorea piztean</span></div>
<div class="r" style="left:12px;top:559px;width:61px;height:1px"></div>
<div class="r" style="left:75px;top:559px;width:162px;height:1px"></div>
<div class="r" style="left:239px;top:559px;width:570px;height:1px"></div>
<div class="tg" style="left:15px;top:528px"><i></i></div>
<div class="lb" style="left:78px;top:528px"><span style="letter-spacing:-1.12px">USB</span></div>
<div class="ds" style="left:241px;top:517px"><span style="letter-spacing:0.21px">Segitu soinua hegaldiaren kontroladorea USB bidez elikatzen denean. Desgaitu hau lantokiko soinuak nahi ez</span><br><span style="letter-spacing:0.47px">badituzu</span></div>
<div class="r" style="left:12px;top:591px;width:61px;height:1px"></div>
<div class="r" style="left:75px;top:591px;width:162px;height:1px"></div>
<div class="r" style="left:239px;top:591px;width:570px;height:1px"></div>
<div class="tg" style="left:15px;top:569px"><i></i></div>
<div class="lb" style="left:78px;top:569px"><span style="letter-spacing:-0.88px">BLACKBOX_ERASE</span></div>
<div class="ds" style="left:241px;top:568px"><span style="letter-spacing:0.20px">Soinua, kutxabeltza ezabaketa amaitzen denean</span></div>
<div class="r" style="left:12px;top:623px;width:61px;height:1px"></div>
<div class="r" style="left:75px;top:623px;width:162px;height:1px"></div>
<div class="r" style="left:239px;top:623px;width:570px;height:1px"></div>
<div class="tg" style="left:15px;top:601px"><i></i></div>
<div class="lb" style="left:78px;top:601px"><span style="letter-spacing:-0.73px">CRASH_FLIP</span></div>
<div class="ds" style="left:241px;top:600px"><span style="letter-spacing:0.30px">Soinu bat dortoka modua gaituta dagoenean</span></div>
<div class="r" style="left:12px;top:655px;width:61px;height:1px"></div>
<div class="r" style="left:75px;top:655px;width:162px;height:1px"></div>
<div class="r" style="left:239px;top:655px;width:570px;height:1px"></div>
<div class="tg" style="left:15px;top:633px"><i></i></div>
<div class="lb" style="left:78px;top:633px"><span style="letter-spacing:-0.25px">CAM_CONNECTION_OPEN</span></div>
<div class="ds" style="left:241px;top:632px"><span style="letter-spacing:0.23px">Soinua eman, 5 tekla kamera kontrolean sartzean</span></div>
<div class="r" style="left:12px;top:687px;width:61px;height:1px"></div>
<div class="r" style="left:75px;top:687px;width:162px;height:1px"></div>
<div class="r" style="left:239px;top:687px;width:570px;height:1px"></div>
<div class="tg" style="left:15px;top:665px"><i></i></div>
<div class="lb" style="left:78px;top:665px"><span style="letter-spacing:-0.43px">CAM_CONNECTION_CLOSE</span></div>
<div class="ds" style="left:241px;top:664px"><span style="letter-spacing:0.27px">Soinua eman, 5 tekla kamera kontroletik irtetean</span></div>
<div class="tg" style="left:15px;top:697px"><i></i></div>
<div class="lb" style="left:78px;top:697px"><span style="letter-spacing:-0.24px">RC_SMOOTHING_INIT_FAIL</span></div>
<div class="ds" style="left:241px;top:696px"><span style="letter-spacing:0.23px">Soinua eman armatuta dagoenean eta rc leuntzeak ez ditu iragazkiak hasieratu</span></div>
</div>
</div>

<!-- ================= CONTENT SCROLLBAR ================= -->
<div class="sbar" style="top:249px;height:711px">
  <svg style="top:6px" width="9" height="6"><path d="M0 5.500L4.500 .5 9 5.500z" fill="#505050"/></svg>
  <div class="th" style="top:346px;height:348px"></div>
  <svg style="top:700px" width="9" height="6"><path d="M0 .5L4.500 5.500 9 .5z" fill="#a3a3a3"/></svg>
</div>

<!-- ================= BOTTOM TOOLBAR ================= -->
<style>
#tool{position:absolute;left:204px;top:960px;width:1716px;height:51px;background:#efefef;border-top:1px solid #c6c6c6;box-shadow:0 -1px 6px rgba(0,0,0,.13)}
#save{position:absolute;left:1541px;top:10px;width:155px;height:30px;border-radius:3px;background:#ffbb00;border:1px solid #dba718;color:#000;font-weight:700;font-size:12px;line-height:28px;text-align:center;white-space:nowrap}
#status{position:absolute;left:0;top:1011px;width:1920px;height:21px;background:#bfbfb8;border-top:1px solid #9c9c9c;font-size:12px;line-height:22px;color:#4c4c4c;white-space:nowrap}
#status>span{position:absolute;top:0}
#status u{position:absolute;top:0;width:1px;height:20px;background:#9a9a96}
#task{position:absolute;left:0;top:1032px;width:1920px;height:48px;background:linear-gradient(90deg,#1c1c1d 0%,#1c1c1d 12%,#1b2022 30%,#1b2022 78%,#1c1d1f 92%);border-top:1px solid #2a2c2e}
#task .w{position:absolute;color:#fff;font-size:12px;line-height:16px;white-space:nowrap}
#search{position:absolute;left:412px;top:8px;width:218px;height:30px;border-radius:15px;background:#f3f3f3}
#search>span{position:absolute;left:36px;top:6px;font-size:14px;line-height:16px;color:#5a5a5a}
.ti{position:absolute;top:10px;width:26px;height:26px}
.dot{position:absolute;top:39px;width:6px;height:3px;border-radius:2px;background:#8e8e8e}
</style>
<div id="tool"><div id="save"><span style="letter-spacing:0.31px">Gorde eta berrabiarazi</span></div></div>

<!-- ================= STATUS BAR ================= -->
<div id="status">
  <span style="left:10px"><span style="letter-spacing:0.07px">Atakaren erabilera: D: 16 % U: 0 %</span></span><u style="left:209px"></u>
  <span style="left:220px"><span style="letter-spacing:0.14px">Pakete errorea: 0</span></span><u style="left:326px"></u>
  <span style="left:337px"><span style="letter-spacing:0.07px">I2C errorea: 0</span></span><u style="left:422px"></u>
  <span style="left:433px"><span style="letter-spacing:0.27px">Zikloaren denbora: 124</span></span><u style="left:573px"></u>
  <span style="left:584px"><span style="letter-spacing:-0.27px">CPU Karga: 43 %</span></span>
  <u style="left:1313px"></u>
  <span style="left:1324px"><span style="letter-spacing:-0.11px">Konfiguratzailea: 10.10.0 (c97deaf) , Firmwarea: 4.5.2 BTFL , Target: BEFH/BETAFPVF405_ELRS(STM32F405)</span></span>
</div>

<!-- ================= TASKBAR ================= -->
<div id="task">
  <div class="w" style="left:51px;top:7px"><span style="letter-spacing:-1.17px">7&deg;C</span></div>
  <div class="w" style="left:51px;top:22.500px;color:#dcdcdc"><span style="letter-spacing:-0.10px">Temps d&eacute;gag&eacute;</span></div>
  <div id="search"><span><span style="letter-spacing:-0.53px">Rechercher</span></span></div>
  <div class="abs" style="left:1515px;top:3px;width:40px;height:40px;border-radius:4px;background:#2b2f32;border:1px solid #373b3e"></div>
  <svg class="abs" style="left:19px;top:10.500px" width="24" height="24" viewBox="0 0 25 25"><defs><linearGradient id="mn" x1="0" y1="0" x2="0" y2="1"><stop offset="0" stop-color="#f8c92a"/><stop offset="1" stop-color="#f07c10"/></linearGradient></defs><path d="M15 1.200C21.500 4 25 11.500 21.500 18 18 24.500 8 25.300 1 16.800 9 19 17.500 13 15 1.200Z" fill="url(#mn)"/></svg>
  <svg class="abs" style="left:375px;top:12px" width="24" height="24" viewBox="0 0 24 24"><defs><linearGradient id="wn" x1="0" y1="0" x2="1" y2="1"><stop offset="0" stop-color="#74e0ff"/><stop offset="1" stop-color="#0f98f5"/></linearGradient></defs><path d="M0 0H11V11H0ZM12.200 0H23.200V11H12.200ZM0 12.200H11V23.200H0ZM12.200 12.200H23.200V23.200H12.200Z" fill="url(#wn)"/></svg>
  <svg class="abs" style="left:421px;top:14px" width="18" height="18" viewBox="0 0 18 18"><circle cx="8.600" cy="8.100" r="5.800" fill="none" stroke="#2b2b2b" stroke-width="1.500"/><path d="M12.800 12.300L16.200 15.800" stroke="#2b2b2b" stroke-width="1.600" stroke-linecap="round"/></svg>
  <div class="ti" style="left:642.1px"><svg viewBox="0 0 26 26" width="26" height="26"><defs><linearGradient id="tv1" x1="0" y1="0" x2="0" y2="1"><stop offset="0" stop-color="#fff"/><stop offset="1" stop-color="#cfcfcf"/></linearGradient><linearGradient id="tv2" x1="0" y1="0" x2="0" y2="1"><stop offset="0" stop-color="#777"/><stop offset="1" stop-color="#555"/></linearGradient></defs><rect x=".9" y="7.900" width="17.900" height="15.900" rx="2" fill="url(#tv2)"/><rect x="7.200" y="1.800" width="17.900" height="16.400" rx="2" fill="url(#tv1)"/><path d="M7.200 7.900H18.800V18.200H9.200a2 2 0 0 1-2-2Z" fill="#b9b9b9" opacity=".85"/></svg></div>
  <div class="ti" style="left:685.3px"><svg viewBox="0 0 26 26" width="26" height="26"><defs><linearGradient id="st" x1="0" y1="0" x2="0" y2="1"><stop offset="0" stop-color="#fff"/><stop offset="1" stop-color="#e4e4e4"/></linearGradient></defs><path d="M7.500 8.500V4.600a2 2 0 0 1 2-2h7a2 2 0 0 1 2 2V8.500" fill="none" stroke="#22a8ea" stroke-width="1.700"/><path d="M1.500 7.500a2 2 0 0 1 2-2h19a2 2 0 0 1 2 2V21.200a4 4 0 0 1-4 4H5.500a4 4 0 0 1-4-4Z" fill="url(#st)"/><rect x="8.600" y="11.200" width="3.800" height="3.800" fill="#f25022"/><rect x="13.700" y="11.200" width="3.800" height="3.800" fill="#7fba00"/><rect x="8.600" y="16.100" width="3.800" height="3.800" fill="#00a4ef"/><rect x="13.700" y="16.100" width="3.800" height="3.800" fill="#ffb900"/></svg></div>
  <div class="ti" style="left:730.1px"><svg viewBox="0 0 26 26" width="26" height="26"><defs><linearGradient id="ex" x1="0" y1="0" x2="0" y2="1"><stop offset="0" stop-color="#ffdb6b"/><stop offset="1" stop-color="#f6ba24"/></linearGradient></defs><path d="M.9 3.500a1.500 1.500 0 0 1 1.500-1.500h6.800l2.400 2.200-1.500 2H.9Z" fill="#e7a100"/><path d="M.9 6.200 9.700 6.200 11.800 4.800H24a1.300 1.300 0 0 1 1.300 1.300V22.500a1.300 1.300 0 0 1-1.300 1.300H2.200A1.300 1.300 0 0 1 .9 22.500Z" fill="url(#ex)"/><path d="M5.100 23.800V18.800a2 2 0 0 1 2-2h11a2 2 0 0 1 2 2V23.800Z" fill="#1b86da"/><rect x="7.800" y="19.300" width="9.600" height="1.500" rx=".7" fill="#0c62b0"/></svg></div>
  <div class="ti" style="left:774.0px"><svg viewBox="0 0 26 26" width="26" height="26"><path d="M12.9 12.8L2.29 6.68A12.25 12.25 0 0 1 23.51 6.68Z" fill="#ea4335"/><path d="M12.9 12.8L23.51 6.68A12.25 12.25 0 0 1 12.90 25.05Z" fill="#fbbc05"/><path d="M12.9 12.8L12.90 25.05A12.25 12.25 0 0 1 2.29 6.67Z" fill="#34a853"/><path d="M2.300 6.700L8 16 12.900 12.800Z" fill="#34a853"/><path d="M23.500 6.700H12.500L12.900 12.800Z" fill="#ea4335"/><path d="M12.900 25L18.500 15.500 12.900 12.800Z" fill="#fbbc05"/><circle cx="12.900" cy="12.800" r="6.200" fill="#fff"/><circle cx="12.900" cy="12.800" r="4.900" fill="#4285f4"/></svg></div>
  <div class="ti" style="left:818.0px"><svg viewBox="0 0 26 26" width="26" height="26"><path d="M3.100 23.800L6 19H20L22.800 23.800Z" fill="#f27d00"/><path d="M13 1.800c.8 0 1.300.5 1.600 1.300L19.600 19c-1.500 1.300-11.700 1.300-13.200 0L11.400 3.100c.3-.8.800-1.300 1.600-1.300Z" fill="#ff8f0a"/><path d="M10.300 6.600h5.400l1 3.300c-1.800.7-5.600.7-7.400 0ZM8.300 13.100c2.500 1 6.900 1 9.400 0l1.100 3.700c-2.800 1.200-8.800 1.200-11.600 0Z" fill="#f1f1f1"/></svg></div>
  <div class="ti" style="left:862.0px"><svg viewBox="0 0 26 26" width="26" height="26"><path d="M2 1.800H14L19 6.800V23.300H2Z" fill="#e9e9e9"/><path d="M14 1.800V6.800H19Z" fill="#bdbdbd"/><path d="M2 1.800H4.300V23.300H2Z" fill="#9a9a9a"/><path d="M2 3h2.300M2 5.500h2.300M2 8h2.300M2 10.500h2.300M2 13h2.300M2 15.500h2.300M2 18h2.300M2 20.500h2.300" stroke="#444" stroke-width="1.100"/><path d="M6 6h7M6 8.500h10M6 11h5M6 13.500h4" stroke="#c4c4c4" stroke-width=".9"/><path d="M15.500 9.700c-2.600 0-2.800 1.100-2.800 2v1.700h3v.6h-4.300c-1.200 0-2.200.8-2.200 2.900 0 2 .9 2.900 2 2.900h1.300v-1.700c0-1.200 1-2.100 2.200-2.100h3c1 0 1.800-.8 1.800-1.800v-2.500c0-1.200-1.200-2-2.800-2Z" fill="#3673a7"/><circle cx="14.200" cy="11.300" r=".6" fill="#fff"/><path d="M19 24.700c2.600 0 2.800-1.100 2.800-2v-1.700h-3v-.6h4.300c1.200 0 2.200-.8 2.200-2.900 0-2-.9-2.900-2-2.900h-1.300v1.700c0 1.200-1 2.100-2.200 2.100h-3c-1 0-1.800.8-1.800 1.800v2.500c0 1.200 1.200 2 2.800 2Z" fill="#ffd540"/><circle cx="20.300" cy="23.100" r=".6" fill="#fff"/></svg></div>
  <div class="ti" style="left:905.6px"><svg viewBox="0 0 26 26" width="26" height="26"><defs><linearGradient id="ol" x1="0" y1="0" x2="1" y2="1"><stop offset="0" stop-color="#2b8df0"/><stop offset="1" stop-color="#4a44cf"/></linearGradient></defs><path d="M13 1.800L24.300 8.300V21.800a2 2 0 0 1-2 2H5.800a2 2 0 0 1-2-2V8.300Z" fill="#27a9ec"/><path d="M13 1.800L24.300 8.300 10 17.500 5 13 3.800 8.300Z" fill="url(#ol)"/><path d="M24.300 9.500V21.800a2 2 0 0 1-2 2H9L13 16.500Z" fill="#3fd0fb"/><path d="M8 6.200 19.500 4.600M6.500 9.500 22.500 7.300" stroke="#7c8bf0" stroke-width="1.600" opacity=".55"/><rect x="1.800" y="12.600" width="9.300" height="8.400" rx="1.500" fill="#0f5fc2"/><circle cx="6.400" cy="16.800" r="2.300" fill="none" stroke="#fff" stroke-width="1.300"/></svg></div>
  <div class="ti" style="left:950.0px"><svg viewBox="0 0 26 26" width="26" height="26"><defs><linearGradient id="br" x1="0" y1="0" x2="0" y2="1"><stop offset="0" stop-color="#ff6a2b"/><stop offset="1" stop-color="#f0301c"/></linearGradient></defs><path d="M13 .8L16.800 2.200 19.500 1.600 22.200 4.500 21.600 6.300 23 9 21.500 15.500C20.800 18.500 18.500 21 15.500 23.200L13 24.800 10.500 23.200C7.500 21 5.200 18.500 4.500 15.500L3 9 4.400 6.300 3.800 4.500 6.500 1.600 9.200 2.200Z" fill="url(#br)"/><path d="M13 5.200L16.300 4.800 19.300 7.300 18.600 8.600 19.600 10.800 17.300 14.200 18 16 15.300 17.700 16 19.200 13 21.300 10 19.200 10.700 17.700 8 16 8.700 14.200 6.400 10.800 7.400 8.600 6.700 7.300 9.700 4.800Z" fill="#fff"/><path d="M8.800 9.300l2.700.8-1.300 1.400ZM17.200 9.300l-2.700.8 1.300 1.400ZM13 11.500l1 4-1 1.300-1-1.300ZM11 17.600l2 1 2-1-2 1.900Z" fill="#f2452a"/></svg></div>
  <div class="ti" style="left:994.0px"><svg viewBox="0 0 26 26" width="26" height="26"><circle cx="13" cy="13" r="12.200" fill="#58c70a"/><path d="M3.500 7.500C6 5 9 6.500 13 9.500 17 6.500 20 5 22.500 7.500 24 12 23 16 21 19H5C3 16 2 12 3.500 7.500Z" fill="#6fd821" opacity=".7"/><ellipse cx="7.400" cy="12.700" rx="3.400" ry="4.400" fill="#fff"/><ellipse cx="18.600" cy="12.700" rx="3.400" ry="4.400" fill="#fff"/><ellipse cx="8" cy="12.900" rx="1.300" ry="2.100" fill="#3c3c3c"/><ellipse cx="18" cy="12.900" rx="1.300" ry="2.100" fill="#3c3c3c"/><path d="M11.300 15.200h3.400L13 17.800Z" fill="#ff9600"/></svg></div>
  <div class="ti" style="left:1038.0px"><svg viewBox="0 0 26 26" width="26" height="26"><clipPath id="dc"><path d="M13.800 .8C15 4.500 18.500 7 20.500 10.500 23 15 21.500 22.500 14.500 24.800 8 26 3 21 3.800 15 4.500 9.500 11.500 6.500 13.800 .8Z"/></clipPath><g clip-path="url(#dc)"><rect width="26" height="26" fill="#26c4f4"/><path d="M0 26L26 26 26 18C18 22 10 17 3 14Z" fill="#1f8df0"/><path d="M0 17C8 12 16 22 26 17V10C18 14 10 6 0 10Z" fill="#8a5fd6"/><path d="M0 11C8 5 17 15 26 11V5C20 8 12 2 4 3Z" fill="#ef4f8b"/><path d="M10 5C13 3 16 5 19 7L14 0Z" fill="#ffc928"/></g></svg></div>
  <div class="ti" style="left:1082.0px"><svg viewBox="0 0 26 26" width="26" height="26"><defs><radialGradient id="sm" cx=".45" cy=".3" r=".8"><stop offset="0" stop-color="#fff3a0"/><stop offset=".6" stop-color="#f7c733"/><stop offset="1" stop-color="#e08a10"/></radialGradient></defs><path d="M3 12a11 10 0 0 1 22 0" fill="none" stroke="#444" stroke-width="1.600"/><circle cx="14" cy="12.700" r="9.300" fill="url(#sm)"/><rect x="1.800" y="9" width="4.600" height="8" rx="2.300" fill="#2f9c94"/><rect x="21.600" y="9" width="3.400" height="7" rx="1.700" fill="#2f9c94"/><ellipse cx="11.500" cy="9.800" rx="1.800" ry="2.200" fill="#fff"/><ellipse cx="17.200" cy="9.500" rx="1.700" ry="2.100" fill="#fff"/><circle cx="11.900" cy="10.200" r="1" fill="#2a8f8a"/><circle cx="17.500" cy="9.900" r="1" fill="#2a8f8a"/><path d="M9 14.500c3 1.200 7 .8 10-1 .2 4-2.500 7-5.200 7-2.800 0-4.600-2.800-4.800-6Z" fill="#b01818"/><path d="M10.200 15.300c2.500.8 5.500.5 7.800-.6l-.3 1.500c-2.200.9-5 .9-7.200.3Z" fill="#fff"/><path d="M5 17c2 3.500 6 5 9 4.500" fill="none" stroke="#333" stroke-width="1"/></svg></div>
  <div class="ti" style="left:1126.0px"><svg viewBox="0 0 26 26" width="26" height="26"><g fill="none" stroke="#fff" stroke-width="1.800" transform="translate(13 13) scale(.9)"><path d="M-3.500 -11.400a5.800 5.800 0 0 1 9.800 3.600V-.5L0 3.200-3.200 1.300" transform="rotate(0)"/><path d="M-3.500 -11.400a5.800 5.800 0 0 1 9.800 3.600V-.5L0 3.200-3.200 1.300" transform="rotate(60)"/><path d="M-3.500 -11.400a5.800 5.800 0 0 1 9.800 3.600V-.5L0 3.200-3.200 1.300" transform="rotate(120)"/><path d="M-3.500 -11.400a5.800 5.800 0 0 1 9.800 3.600V-.5L0 3.200-3.200 1.300" transform="rotate(180)"/><path d="M-3.500 -11.400a5.800 5.800 0 0 1 9.800 3.600V-.5L0 3.200-3.200 1.300" transform="rotate(240)"/><path d="M-3.500 -11.400a5.800 5.800 0 0 1 9.800 3.600V-.5L0 3.200-3.200 1.300" transform="rotate(300)"/></g></svg></div>
  <div class="ti" style="left:1170.0px"><svg viewBox="0 0 26 26" width="26" height="26"><circle cx="15.800" cy="12.700" r="9.200" fill="#0d0d0d"/><path d="M24.800 11.800h-6v1.800h6Z" fill="#8c8c8c" opacity=".8"/><circle cx="15.800" cy="12.700" r="2" fill="#d00"/><path d="M1 4.100L16 .8V24.300L1 22Z" fill="#fa0505"/><circle cx="7.700" cy="12.600" r="4.200" fill="none" stroke="#fff" stroke-width="1.100"/><circle cx="7.700" cy="12.600" r="1.900" fill="none" stroke="#fff" stroke-width="1.100"/><path d="M7.700 12.600L10.800 9.500" stroke="#fff" stroke-width="1"/></svg></div>
  <div class="ti" style="left:1213.4px"><svg viewBox="0 0 26 26" width="26" height="26"><defs><linearGradient id="tm" x1="0" y1="0" x2="1" y2="1"><stop offset="0" stop-color="#5a62d3"/><stop offset="1" stop-color="#3f48b8"/></linearGradient></defs><circle cx="21.700" cy="6.300" r="2.500" fill="#5059c9"/><path d="M18.500 10.200h6a1 1 0 0 1 1 1v5.600a3.800 3.800 0 0 1-7 1.500Z" fill="#5059c9"/><circle cx="14.200" cy="5.500" r="3.400" fill="#7b83eb"/><path d="M8.500 10.200h10.700a1.200 1.200 0 0 1 1.200 1.200v6.800a6 6 0 0 1-12 0Z" fill="#7b83eb"/><rect x="1.400" y="6.800" width="12.200" height="12.200" rx="1.300" fill="url(#tm)"/><path d="M4.600 9.900h5.800v1.600H8.400v5.300H6.600v-5.300H4.600Z" fill="#fff"/></svg></div>
  <div class="ti" style="left:1258.0px"><svg viewBox="0 0 26 26" width="26" height="26"><circle cx="13" cy="12.900" r="10.600" fill="#0b0b0b" stroke="#e32222" stroke-width="1.300"/><g transform="translate(11.300 13.300)" fill="#e32222"><circle r="4.400"/><rect x="-1.300" y="-6.300" width="2.600" height="2.600" transform="rotate(0)"/><rect x="-1.300" y="-6.300" width="2.600" height="2.600" transform="rotate(45)"/><rect x="-1.300" y="-6.300" width="2.600" height="2.600" transform="rotate(90)"/><rect x="-1.300" y="-6.300" width="2.600" height="2.600" transform="rotate(135)"/><rect x="-1.300" y="-6.300" width="2.600" height="2.600" transform="rotate(180)"/><rect x="-1.300" y="-6.300" width="2.600" height="2.600" transform="rotate(225)"/><rect x="-1.300" y="-6.300" width="2.600" height="2.600" transform="rotate(270)"/><rect x="-1.300" y="-6.300" width="2.600" height="2.600" transform="rotate(315)"/></g><circle cx="11.300" cy="13.300" r="1.900" fill="#0b0b0b"/><path d="M12.500 19.500C15.500 18 17 15.500 17.200 12.500H15.300L18.500 7.800 21.600 12.500H19.800C19.500 16.500 17 19 13.500 20.200Z" fill="#e32222" stroke="#0b0b0b" stroke-width=".5"/></svg></div>
  <div class="ti" style="left:1302.0px"><svg viewBox="0 0 26 26" width="26" height="26"><defs><linearGradient id="sg" x1="0" y1="0" x2="0" y2="1"><stop offset="0" stop-color="#121541"/><stop offset=".5" stop-color="#15346f"/><stop offset="1" stop-color="#1b93c8"/></linearGradient></defs><circle cx="13" cy="12.900" r="11.100" fill="url(#sg)"/><circle cx="17.500" cy="9.100" r="3" fill="none" stroke="#fff" stroke-width="1.500"/><circle cx="17.500" cy="9.100" r="1.200" fill="#fff" opacity=".85"/><path d="M2 11.800L9 14.700A2.800 2.800 0 1 1 7.300 17.900L2.200 15.800Z" fill="#fff"/><path d="M10 15L14.800 11.300 16.800 13.400 11.300 17Z" fill="#fff"/><circle cx="9.700" cy="16.800" r="1.500" fill="none" stroke="#24568f" stroke-width=".7"/></svg></div>
  <div class="ti" style="left:1346.0px"><svg viewBox="0 0 26 26" width="26" height="26"><defs><radialGradient id="ut" cx=".4" cy=".3" r=".8"><stop offset="0" stop-color="#8cc958"/><stop offset="1" stop-color="#64a52c"/></radialGradient></defs><circle cx="13.100" cy="12.900" r="12.100" fill="url(#ut)"/><path d="M6 8.500L9.300 7.500 11.500 16.300C12.300 18.300 15.500 17.600 15.200 15.300L13.600 7.300 16.900 6.400 18.600 14.200C19 16 20 16.800 21.800 16.500L22.300 18.800C20 19.600 18.300 19 17.300 17.700 15.800 20.200 12.500 20.500 10.800 18.800L12 23.800 8.800 24.500Z" fill="#fff"/></svg></div>
  <div class="ti" style="left:1390.0px"><svg viewBox="0 0 26 26" width="26" height="26"><rect x="1.200" y="1.100" width="23.600" height="23.600" fill="#000"/><circle cx="12.900" cy="12.800" r="9.400" fill="none" stroke="#6d64cc" stroke-width="1.200"/><g stroke="#6d64cc" stroke-width="1" transform="translate(12.900 12.800)"><path d="M0 -9.400V-11.200" transform="rotate(0)"/><path d="M0 -9.400V-11.200" transform="rotate(30)"/><path d="M0 -9.400V-11.200" transform="rotate(60)"/><path d="M0 -9.400V-11.200" transform="rotate(90)"/><path d="M0 -9.400V-11.200" transform="rotate(120)"/><path d="M0 -9.400V-11.200" transform="rotate(150)"/><path d="M0 -9.400V-11.200" transform="rotate(180)"/><path d="M0 -9.400V-11.200" transform="rotate(210)"/><path d="M0 -9.400V-11.200" transform="rotate(240)"/><path d="M0 -9.400V-11.200" transform="rotate(270)"/><path d="M0 -9.400V-11.200" transform="rotate(300)"/><path d="M0 -9.400V-11.200" transform="rotate(330)"/></g><circle cx="12.900" cy="2.600" r="1.100" fill="#8a82e0"/><circle cx="12.900" cy="23" r="1.100" fill="#8a82e0"/><path d="M12.900 12.800L7.300 6.500M12.900 12.800L16.800 10.200M12.900 12.800L8.500 20" stroke="#8f88e6" stroke-width="1" fill="none"/></svg></div>
  <div class="ti" style="left:1434.0px"><svg viewBox="0 0 26 26" width="26" height="26"><defs><linearGradient id="rc" x1="0" y1="0" x2="0" y2="1"><stop offset="0" stop-color="#93c878"/><stop offset=".5" stop-color="#6aa6b0"/><stop offset="1" stop-color="#3560d8"/></linearGradient></defs><circle cx="13" cy="12.900" r="12" fill="url(#rc)"/><g fill="none" stroke="#fff" stroke-width=".9" opacity=".92"><path d="M9.500 5.200a5 5 0 0 1 7 0M10.800 6.700a3.200 3.200 0 0 1 4.400 0M12 8.100a1.500 1.500 0 0 1 2 0"/><path d="M13 8.500v2.500M11 11h4M6 20.500V13.500a2 2 0 0 1 2-2h10a2 2 0 0 1 2 2V20.500"/><rect x="7.800" y="13.800" width="3.600" height="3.200"/><rect x="14.600" y="13.800" width="3.600" height="3.200"/><rect x="11" y="17.800" width="4" height="2.600"/><path d="M4.700 20.500V14M21.300 20.500V14"/></g></svg></div>
  <div class="ti" style="left:1478.0px"><svg viewBox="0 0 26 26" width="26" height="26"><circle cx="13" cy="12.900" r="10.600" fill="#0b0b0b" stroke="#e32222" stroke-width="1.300"/><g transform="translate(11.300 13.300)" fill="#e32222"><circle r="4.400"/><rect x="-1.300" y="-6.300" width="2.600" height="2.600" transform="rotate(0)"/><rect x="-1.300" y="-6.300" width="2.600" height="2.600" transform="rotate(45)"/><rect x="-1.300" y="-6.300" width="2.600" height="2.600" transform="rotate(90)"/><rect x="-1.300" y="-6.300" width="2.600" height="2.600" transform="rotate(135)"/><rect x="-1.300" y="-6.300" width="2.600" height="2.600" transform="rotate(180)"/><rect x="-1.300" y="-6.300" width="2.600" height="2.600" transform="rotate(225)"/><rect x="-1.300" y="-6.300" width="2.600" height="2.600" transform="rotate(270)"/><rect x="-1.300" y="-6.300" width="2.600" height="2.600" transform="rotate(315)"/></g><circle cx="11.300" cy="13.300" r="1.900" fill="#0b0b0b"/><path d="M12.500 19.500C15.500 18 17 15.500 17.200 12.500H15.300L18.500 7.800 21.600 12.500H19.800C19.500 16.500 17 19 13.500 20.200Z" fill="#e32222" stroke="#0b0b0b" stroke-width=".5"/></svg></div>
  <div class="ti" style="left:1522.0px"><svg viewBox="0 0 26 26" width="26" height="26"><defs><linearGradient id="bfg" x1="0" y1="0" x2="0" y2="1"><stop offset="0" stop-color="#353535"/><stop offset="1" stop-color="#1a1a1a"/></linearGradient></defs><rect x="1.900" y="1.800" width="22.100" height="22" fill="url(#bfg)"/><g transform="translate(3.400 4.200) scale(.235)"><path fill="#f2c40a" d="M50.800 31.200L6 5.800 11.600 13.300 6.300 15.200 13.200 18.900 11.800 20.300C13.500 25 16.500 30 20.500 33.200 26 36.500 35 37.200 41.500 35.600L41 33C35 34.500 27 34 22.500 31 19.500 28.500 17 24.600 15.500 20.400L17 19 11.500 15.700 15.500 14 12 9.500 48 32.300Z"/><path fill="#f2c40a" d="M46.200 18.200C50.500 19.200 55 22 57.600 25.200 62 25.800 66.500 29.500 69.500 33.500 71.200 35.800 72.500 38.200 73.300 40.800 68 40.300 62 39.300 57.200 37.700 56 40 53.800 42.200 50.800 44.100 55 46.500 59.500 49.200 64 50.300 68.500 51.200 73.500 50.800 77.800 49.500 75.500 54.500 70.500 58.500 65 61 59.500 63.300 53 64 47.500 62.800 42.500 61.500 38.500 58 36.800 53.500 36.200 50.500 38 47 41 45 42.500 44.200 44 43.800 45.500 43.700 43.800 43 42.300 41.500 41.600 39.500 40.800 37.300 41 35 42 33.500L43.800 34.400C42.800 37.500 43.500 41.500 46.500 43.200 45.500 41.500 44.800 39.200 45 37 45.300 34.500 46.500 32.500 48.500 31.600 50 30.800 51.500 30 52.300 28.500 53.200 27.200 54 26.200 54.800 25.600 52.500 22.600 49.500 20 46.200 18.200Z"/></g></svg></div>
  <div class="dot" style="left:740px"></div><div class="dot" style="left:960px"></div><div class="dot" style="left:1136px"></div><div class="dot" style="left:1268px"></div><div class="dot" style="left:1444px"></div><div class="dot" style="left:1488px"></div>
  <div class="dot" style="left:1527px;width:16px;background:#a7d9f1"></div>
  <svg class="abs" style="left:1688px;top:18px" width="14" height="9" viewBox="0 0 14 9"><path d="M1.700 7.500L7 2 12.300 7.500" fill="none" stroke="#fff" stroke-width="1.400"/></svg>
  <svg class="abs" style="left:1718px;top:16px" width="18" height="13" viewBox="0 0 18 13"><rect x="1.400" y="1.400" width="15.400" height="10" rx="1.600" fill="none" stroke="#fff" stroke-width="1.100"/><path d="M4 4.300h1.300M6.700 4.300h1.300M9.400 4.300h1.300M12.100 4.300h1.300M4.700 6.500h1.300M7.400 6.500h1.300M10.100 6.500h1.300M12.800 6.500h1.200M5.300 8.900h7.600" stroke="#fff" stroke-width="1.100"/></svg>
  <svg class="abs" style="left:1794px;top:14px" width="19" height="19" viewBox="0 0 19 19"><g fill="none" stroke="#fff" stroke-width="1.200"><path d="M12.800 11.700H2.400a1 1 0 0 1-1-1V2.900a1 1 0 0 1 1-1H11.500"/><path d="M7 11.700v4.100M3.800 16.200h6.700"/><rect x="13.200" y="1.500" width="3.400" height="4.700" rx=".6"/><path d="M14.900 6.200V16.800"/></g></svg>
  <svg class="abs" style="left:1818px;top:15px" width="19" height="16" viewBox="0 0 19 16"><g fill="none" stroke="#fff" stroke-width="1.200" stroke-linejoin="round"><path d="M1.700 5.600H4.300L8 2.500V13.400L4.300 10.300H1.700Z"/><path d="M10.500 5.700a3.300 3.300 0 0 1 0 4.600M12.600 3.800a6 6 0 0 1 0 8.400"/><path d="M14.800 2a8.700 8.700 0 0 1 0 12" opacity=".35"/></g></svg>

  <div class="w" style="left:1745px;top:8px;width:40px;text-align:center"><span style="letter-spacing:-1.20px">FRA</span></div>
  <div class="w" style="left:1745px;top:23.500px;width:40px;text-align:center"><span style="letter-spacing:-1.20px">FR</span></div>
  <div class="w" style="left:1831px;top:7px;width:70px;text-align:right">04:18</div>
  <div class="w" style="left:1831px;top:23px;width:70px;text-align:right">24-10-25</div>
</div>
</body>
</html>
